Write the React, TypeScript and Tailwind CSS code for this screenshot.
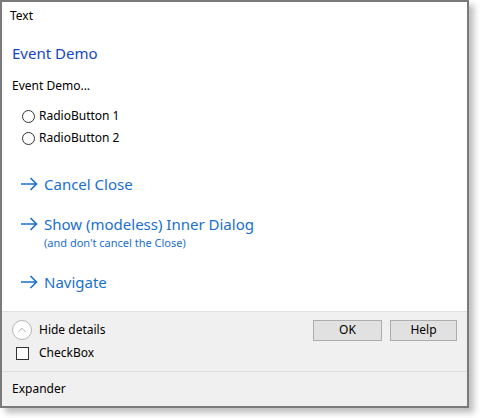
import { ChevronUp } from "lucide-react";

const font = { fontFamily: '"Noto Sans", "Open Sans", Arial, sans-serif' };

function Arrow() {
  return (
    <svg width="18" height="14" viewBox="0 0 18 14" fill="none" stroke="#1a6fd0" strokeWidth="1.6">
      <path d="M1 7H16.5M10.5 1L16.5 7L10.5 13" />
    </svg>
  );
}

function Radio({ label }: { label: string }) {
  return (
    <div className="flex items-center h-[16px] pl-[20px] gap-[4px]">
      <span className="w-[13px] h-[13px] rounded-full border border-[#333] bg-white" />
      <span className="text-[12px] text-black leading-none">{label}</span>
    </div>
  );
}

function CommandLink({ label, note }: { label: string; note?: string }) {
  return (
    <div className="pl-[18px]">
      <div className="flex items-center h-[22px] gap-[6px]">
        <Arrow />
        <span className="text-[15px] text-[#1a6fd0] leading-none">{label}</span>
      </div>
      {note && (
        <div className="pl-[24px] h-[14px] flex items-center text-[11px] text-[#1a6fd0] leading-none">
          {note}
        </div>
      )}
    </div>
  );
}

export default function App() {
  return (
    <div className="w-[480px] h-[418px] bg-white" style={font}>
      <div className="w-[469px] h-[408px] border-2 border-[#7a7a7a] bg-white flex flex-col shadow-[5px_5px_6px_rgba(0,0,0,0.25)]">
        <div className="h-[309px] bg-white">
          <div className="h-[28px] flex items-center pl-[8px] text-[12px] text-black">Text</div>
          <div className="mt-[11px] h-[24px] flex items-center pl-[10px] text-[15px] text-[#1446c4]">
            Event Demo
          </div>
          <div className="mt-[13px] h-[16px] flex items-center pl-[10px] text-[12px] text-black">
            Event Demo...
          </div>
          <div className="mt-[14px] flex flex-col gap-[6px]">
            <Radio label="RadioButton 1" />
            <Radio label="RadioButton 2" />
          </div>
          <div className="mt-[27px] flex flex-col">
            <CommandLink label="Cancel Close" />
            <div className="mt-[18px]">
              <CommandLink label="Show (modeless) Inner Dialog" note="(and don't cancel the Close)" />
            </div>
            <div className="mt-[22px]">
              <CommandLink label="Navigate" />
            </div>
          </div>
        </div>
        <div className="h-[60px] border-t border-[#dfdfdf] bg-[#f0f0f0] pt-[7px]">
          <div className="flex items-center justify-between h-[22px] pl-[10px] pr-[10px]">
            <div className="flex items-center gap-[7px]">
              <span className="w-[20px] h-[20px] rounded-full border border-[#b5b5b5] bg-white flex items-center justify-center">
                <ChevronUp size={14} strokeWidth={1.2} color="#8a8a8a" />
              </span>
              <span className="text-[12px] text-black">Hide details</span>
            </div>
            <div className="flex gap-[8px]">
              <button className="w-[69px] h-[21px] border border-[#adadad] bg-[#e1e1e1] text-[12px] text-black">OK</button>
              <button className="w-[67px] h-[21px] border border-[#adadad] bg-[#e1e1e1] text-[12px] text-black">Help</button>
            </div>
          </div>
          <div className="flex items-center h-[16px] mt-[4px] pl-[14px] gap-[10px]">
            <span className="w-[13px] h-[13px] border border-[#333] bg-white" />
            <span className="text-[12px] text-black">CheckBox</span>
          </div>
        </div>
        <div className="flex-1 border-t border-[#dfdfdf] bg-[#f0f0f0] flex items-center pl-[10px] text-[12px] text-black">
          Expander
        </div>
      </div>
    </div>
  );
}
